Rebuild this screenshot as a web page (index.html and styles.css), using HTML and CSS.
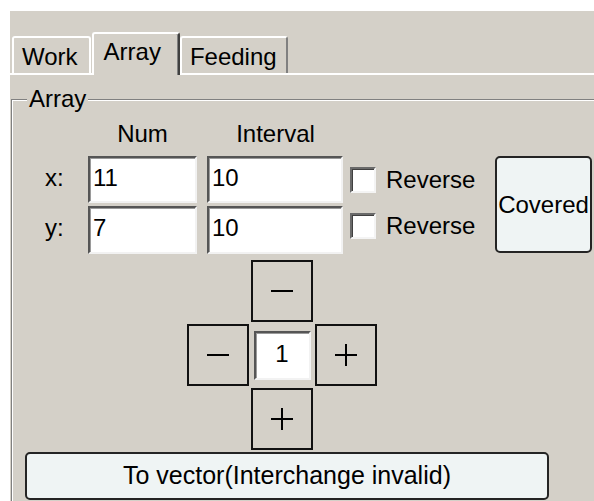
FILE: index.html
```html
<!DOCTYPE html>
<html lang="en">
<head>
    <meta charset="UTF-8">
    <meta name="viewport" content="width=device-width, initial-scale=1.0">
    <title>Array</title>
    <link rel="stylesheet" href="styles.css">
</head>
<body>
    <div class="window">
        <div class="tabs">
            <div class="tab tab-first">Work</div>
            <div class="tab active">Array</div>
            <div class="tab tab-last">Feeding</div>
        </div>

        <div class="pane">
            <fieldset class="group">
                <legend>Array</legend>

                <div class="grid">
                    <span></span>
                    <span class="head">Num</span>
                    <span class="head">Interval</span>
                    <span></span>
                    <span></span>

                    <span class="axis">x:</span>
                    <input class="field" type="text" value="11">
                    <input class="field" type="text" value="10">
                    <label class="rev"><span class="check"></span>Reverse</label>
                    <button class="covered" type="button">Covered</button>

                    <span class="axis">y:</span>
                    <input class="field" type="text" value="7">
                    <input class="field" type="text" value="10">
                    <label class="rev rev-low"><span class="check"></span>Reverse</label>
                </div>

                <div class="pad">
                    <span></span>
                    <button class="step" type="button">
                        <svg width="24" height="24" viewBox="0 0 24 24"><path d="M1 12H23" stroke="#000" stroke-width="2"/></svg>
                    </button>
                    <span></span>

                    <button class="step" type="button">
                        <svg width="24" height="24" viewBox="0 0 24 24"><path d="M1 12H23" stroke="#000" stroke-width="2"/></svg>
                    </button>
                    <div class="cell"><input class="field count" type="text" value="1"></div>
                    <button class="step" type="button">
                        <svg width="24" height="24" viewBox="0 0 24 24"><path d="M1 12H23M12 1V23" stroke="#000" stroke-width="2"/></svg>
                    </button>

                    <span></span>
                    <button class="step" type="button">
                        <svg width="24" height="24" viewBox="0 0 24 24"><path d="M1 12H23M12 1V23" stroke="#000" stroke-width="2"/></svg>
                    </button>
                    <span></span>
                </div>

                <button class="wide" type="button">To vector(Interchange invalid)</button>
            </fieldset>
        </div>
    </div>
</body>
</html>
```

FILE: styles.css
```css
html, body {
    margin: 0;
    padding: 0;
    background-color: #ffffff;
    overflow: hidden;
}
body {
    font-family: "Liberation Sans", Arial, sans-serif;
    font-size: 24px;
    color: #000;
}
.window {
    margin: 11px 0 0 10px;
    height: 490px;
    background-color: #d4d0c8;
    overflow: hidden;
}

/* tabs */
.tabs {
    display: flex;
    align-items: flex-end;
    padding: 21px 0 0 2px;
    position: relative;
    z-index: 1;
}
.tab {
    box-sizing: border-box;
    height: 37px;
    line-height: 35px;
    padding: 1px 14px 0 8px;
    margin-bottom: 2px;
    border-top: 2px solid #ffffff;
    border-left: 2px solid #ffffff;
    border-right: 2px solid #808080;
    border-radius: 3px 3px 0 0;
    background-color: #d4d0c8;
}
.tab-first {
    border-right-color: #ffffff;
    margin-right: 1px;
    padding-right: 11px;
}
.tab-last {
    padding-right: 9px;
}
.tab.active {
    height: 43px;
    line-height: 35px;
    padding: 0 17px 0 10px;
    margin-bottom: 0;
    border-right-color: #404040;
    box-shadow: inset -1px 0 #808080;
}
.pane {
    border-top: 2px solid #ffffff;
    margin-top: -2px;
}

/* group box */
.group {
    margin: 10px -40px 0 1px;
    padding: 0 0 30px 1px;
    border: 1px solid #808080;
    box-shadow: inset 1px 1px #ffffff;
}
.group legend {
    margin-left: 14px;
    padding: 0 2px;
    line-height: 28px;
    background-color: #d4d0c8;
}

.grid {
    display: grid;
    grid-template-columns: 65px 109px 136px 132px 97px;
    grid-template-rows: 33px 47px 48px;
    column-gap: 10px;
    row-gap: 3px;
    margin-top: 7px;
}
.head {
    text-align: center;
    line-height: 28px;
    align-self: start;
}
.head + .head {
    padding-left: 1px;
}
.axis {
    display: flex;
    align-items: center;
    padding-left: 32px;
    padding-bottom: 4px;
}
.field {
    box-sizing: border-box;
    width: 100%;
    height: 100%;
    margin: 0;
    padding: 0 3px 4px;
    font-family: "Liberation Sans", Arial, sans-serif;
    font-size: 24px;
    color: #000;
    background-color: #ffffff;
    border: 2px solid;
    border-color: #555555 #f2f2f2 #f2f2f2 #555555;
    box-shadow: inset 1px 1px #9a9a9a;
    outline: none;
}
.rev {
    display: flex;
    align-items: center;
    gap: 10px;
    margin-left: -3px;
}
.rev-low {
    padding-bottom: 8px;
}
.check {
    box-sizing: border-box;
    width: 26px;
    height: 26px;
    background-color: #ffffff;
    border: 2px solid;
    border-color: #6a6a6a #f4f4f4 #f4f4f4 #6a6a6a;
    box-shadow: inset 1px 1px #404040;
}
.covered {
    grid-row: 2 / 4;
    grid-column: 5;
    height: 97px;
    padding: 0;
    font-family: "Liberation Sans", Arial, sans-serif;
    font-size: 24px;
    color: #000;
    background-color: #eff4f4;
    border: 2px solid #242424;
    border-radius: 5px;
}

/* arrow pad */
.pad {
    display: grid;
    grid-template-columns: 62px 62px 62px;
    grid-template-rows: 62px 62px 62px;
    gap: 2px;
    margin: 6px 0 0 174px;
}
.step {
    display: flex;
    align-items: center;
    justify-content: center;
    padding: 0;
    background-color: #d4d0c8;
    border: 2px solid #111111;
}
.cell {
    display: flex;
    align-items: center;
    justify-content: center;
}
.field.count {
    width: 57px;
    height: 49px;
    padding: 0 0 2px;
    font-size: 24px;
    text-align: center;
}

.wide {
    display: block;
    margin: 2px 0 0 12px;
    width: 524px;
    height: 48px;
    padding: 0 0 2px;
    font-family: "Liberation Sans", Arial, sans-serif;
    font-size: 25px;
    color: #000;
    background-color: #eff4f4;
    border: 2px solid #242424;
    border-radius: 5px;
}
```
